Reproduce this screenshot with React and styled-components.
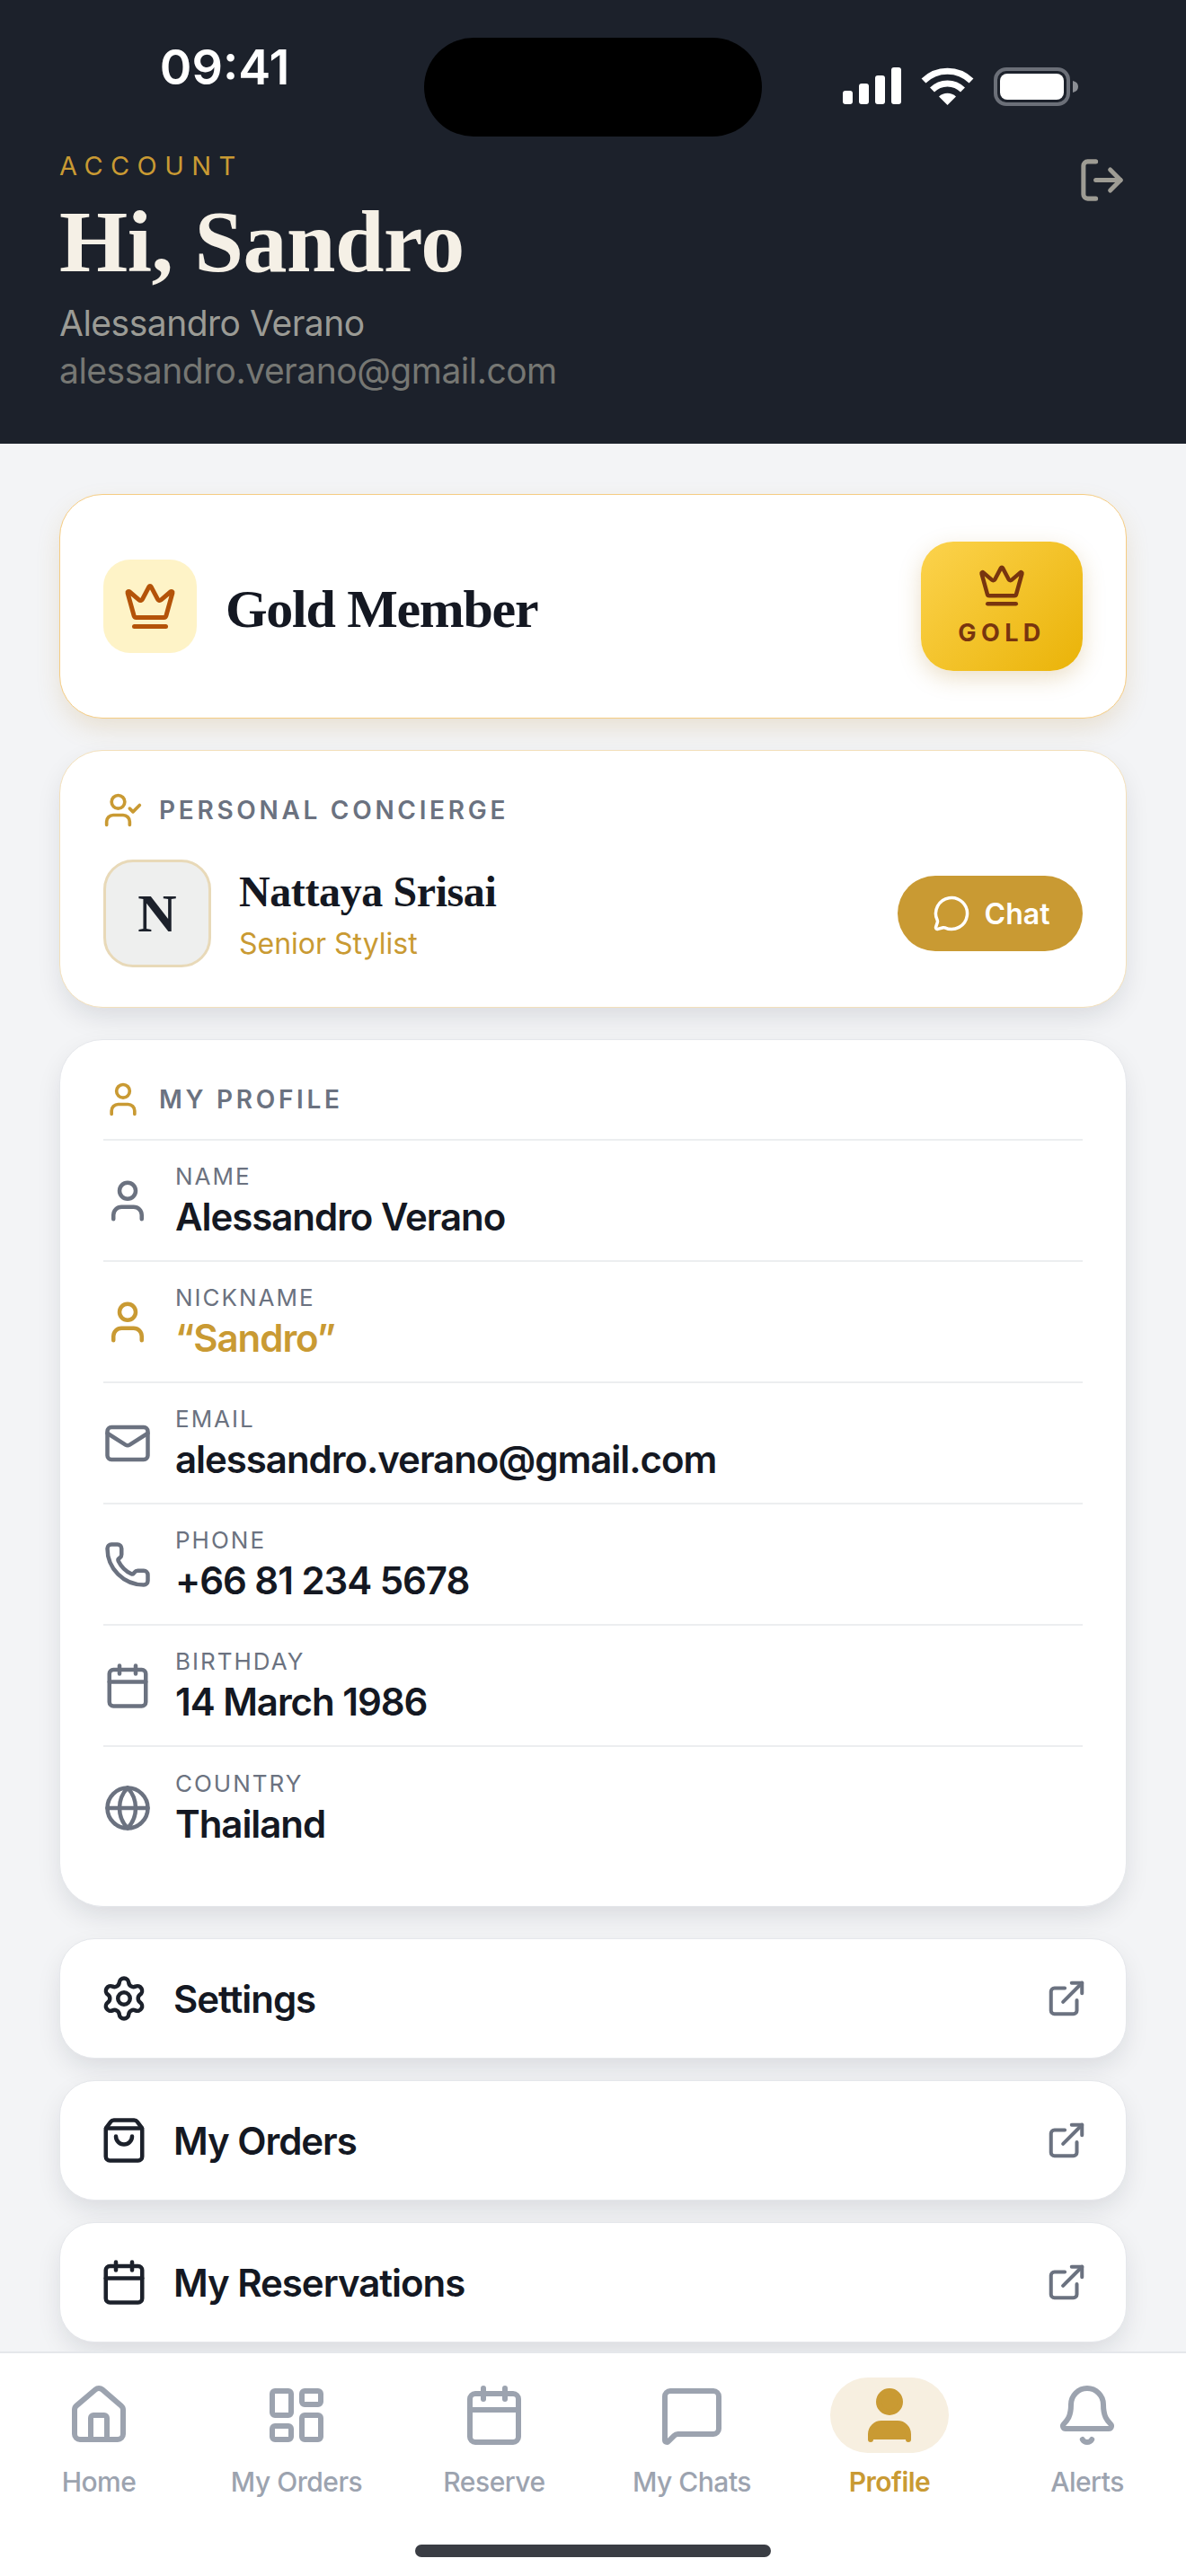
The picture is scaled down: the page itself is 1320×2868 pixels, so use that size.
import React from 'react'
import styled, { createGlobalStyle } from 'styled-components'
import {
  Bell,
  Calendar,
  Crown,
  ExternalLink,
  Globe,
  House,
  LayoutDashboard,
  LogOut,
  Mail,
  MessageCircle,
  MessageSquare,
  Phone,
  Settings,
  ShoppingBag,
  User,
  UserCheck,
} from 'lucide-react'

const GOLD = '#c99a33'
const INK = '#141822'
const SLATE = '#6b7280'
const SERIF = '"Liberation Serif", "Times New Roman", serif'

const profileRows = [
  { label: 'NAME', value: 'Alessandro Verano', Icon: User },
  { label: 'NICKNAME', value: '“Sandro”', Icon: User, accent: true },
  { label: 'EMAIL', value: 'alessandro.verano@gmail.com', Icon: Mail },
  { label: 'PHONE', value: '+66 81 234 5678', Icon: Phone },
  { label: 'BIRTHDAY', value: '14 March 1986', Icon: Calendar },
  { label: 'COUNTRY', value: 'Thailand', Icon: Globe },
]

const menuRows = [
  { label: 'Settings', Icon: Settings },
  { label: 'My Orders', Icon: ShoppingBag },
  { label: 'My Reservations', Icon: Calendar },
]

const navItems = [
  { label: 'Home', Icon: House },
  { label: 'My Orders', Icon: LayoutDashboard },
  { label: 'Reserve', Icon: Calendar },
  { label: 'My Chats', Icon: MessageSquare },
  { label: 'Profile', Icon: User, active: true },
  { label: 'Alerts', Icon: Bell },
]

const SignalIcon = () => (
  <svg width="65" height="41" viewBox="0 0 65 41" fill="#fff">
    <rect x="0" y="26" width="11" height="15" rx="3" />
    <rect x="18" y="18" width="11" height="23" rx="3" />
    <rect x="36" y="9" width="11" height="32" rx="3" />
    <rect x="54" y="0" width="11" height="41" rx="3" />
  </svg>
)

const WifiIcon = () => (
  <svg width="59" height="42" viewBox="0 0 59 42">
    <path d="M3 15 A 38 38 0 0 1 56 15" fill="none" stroke="#fff" strokeWidth="7" />
    <path d="M12.5 25 A 24 24 0 0 1 46.5 25" fill="none" stroke="#fff" strokeWidth="7" />
    <path d="M20 32.5 A 14 14 0 0 1 39 32.5 L29.5 42 Z" fill="#fff" />
  </svg>
)

const BatteryIcon = () => (
  <svg width="94" height="43" viewBox="0 0 94 43">
    <rect x="2" y="2" width="81" height="39" rx="12" fill="none" stroke="#6b6f78" strokeWidth="4" />
    <rect x="7" y="7" width="71" height="29" rx="8" fill="#fff" />
    <path d="M88 15 c4 1 6 3 6 6.500 s-2 5.500 -6 6.500 z" fill="#8b8e94" />
  </svg>
)

const App = () => {
  return (
    <Phone_>
      <GlobalStyle />
      <Header>
        <StatusBar>
          <TimeSlot>
            <Time>09:41</Time>
          </TimeSlot>
          <Island />
          <StatusIcons>
            <SignalIcon />
            <WifiIcon />
            <BatteryIcon />
          </StatusIcons>
        </StatusBar>
        <HeaderBody>
          <div>
            <Eyebrow>ACCOUNT</Eyebrow>
            <Greeting>Hi, Sandro</Greeting>
            <FullName>Alessandro Verano</FullName>
            <HeaderEmail>alessandro.verano@gmail.com</HeaderEmail>
          </div>
          <LogoutButton>
            <LogOut size={55} strokeWidth={2.2} />
          </LogoutButton>
        </HeaderBody>
      </Header>

      <Content>
        <MemberCard>
          <MemberLeft>
            <CrownTile>
              <Crown size={60} strokeWidth={2} />
            </CrownTile>
            <MemberTitle>Gold Member</MemberTitle>
          </MemberLeft>
          <GoldBadge>
            <Crown size={54} strokeWidth={2} />
            <GoldText>GOLD</GoldText>
          </GoldBadge>
        </MemberCard>

        <ConciergeCard>
          <SectionHead>
            <SectionIcon>
              <UserCheck size={44} strokeWidth={2} />
            </SectionIcon>
            <SectionTitle>PERSONAL CONCIERGE</SectionTitle>
          </SectionHead>
          <ConciergeRow>
            <Avatar>N</Avatar>
            <ConciergeInfo>
              <ConciergeName>Nattaya Srisai</ConciergeName>
              <ConciergeRole>Senior Stylist</ConciergeRole>
            </ConciergeInfo>
            <ChatButton>
              <MessageCircle size={42} strokeWidth={2} />
              Chat
            </ChatButton>
          </ConciergeRow>
        </ConciergeCard>

        <ProfileCard>
          <ProfileHead>
            <SectionIcon>
              <User size={44} strokeWidth={2} />
            </SectionIcon>
            <SectionTitle>MY PROFILE</SectionTitle>
          </ProfileHead>
          {profileRows.map(({ label, value, Icon, accent }) => (
            <ProfileRow key={label}>
              <RowIcon $accent={accent}>
                <Icon size={54} strokeWidth={2} />
              </RowIcon>
              <div>
                <RowLabel>{label}</RowLabel>
                <RowValue $accent={accent}>{value}</RowValue>
              </div>
            </ProfileRow>
          ))}
        </ProfileCard>

        <MenuList>
          {menuRows.map(({ label, Icon }) => (
            <MenuRow key={label}>
              <Icon size={54} strokeWidth={2} color="#1c212b" />
              <MenuLabel>{label}</MenuLabel>
              <ExternalLink size={46} strokeWidth={2.1} color={SLATE} />
            </MenuRow>
          ))}
        </MenuList>
      </Content>

      <BottomNav>
        <NavItems>
          {navItems.map(({ label, Icon, active }) => (
            <NavItem key={label} $active={active}>
              <NavIcon $active={active}>
                <Icon size={72} strokeWidth={2} fill={active ? 'currentColor' : 'none'} />
              </NavIcon>
              <NavLabel $active={active}>{label}</NavLabel>
            </NavItem>
          ))}
        </NavItems>
        <HomeIndicator />
      </BottomNav>
    </Phone_>
  )
}

export default App

const GlobalStyle = createGlobalStyle`
  html, body {
    margin: 0;
    padding: 0;
    background: #f3f4f6;
    font-family: Inter, "Liberation Sans", sans-serif;
  }
  * {
    box-sizing: border-box;
  }
`

const Phone_ = styled.div`
  width: 1320px;
  height: 2868px;
  display: flex;
  flex-direction: column;
  overflow: hidden;
  background: #f3f4f6;
`

const Header = styled.header`
  height: 494px;
  flex-shrink: 0;
  background: #1c212b;
  padding-top: 42px;
`

const StatusBar = styled.div`
  display: flex;
  height: 110px;
`

const TimeSlot = styled.div`
  width: 472px;
  padding-top: 10px;
  text-align: center;
  padding-left: 28px;
`

const Time = styled.span`
  font-size: 54px;
  line-height: 46px;
  font-weight: 600;
  color: #fff;
`

const Island = styled.div`
  width: 376px;
  height: 110px;
  border-radius: 55px;
  background: #000;
`

const StatusIcons = styled.div`
  display: flex;
  align-items: flex-start;
  gap: 22px;
  padding: 33px 0 0 90px;
`

const HeaderBody = styled.div`
  display: flex;
  justify-content: space-between;
  padding: 18px 66px 0 66px;
`

const Eyebrow = styled.div`
  font-size: 29px;
  line-height: 30px;
  font-weight: 400;
  letter-spacing: 8.400px;
  color: ${GOLD};
`

const Greeting = styled.h1`
  margin: 14px 0 0;
  font-family: ${SERIF};
  font-size: 98px;
  line-height: 110px;
  font-weight: 700;
  letter-spacing: -0.500px;
  color: #f5f0e6;
`

const FullName = styled.div`
  margin-top: 11px;
  font-size: 39px;
  line-height: 50px;
  letter-spacing: -0.500px;
  color: #9b9b95;
`

const HeaderEmail = styled.div`
  margin-top: 3px;
  font-size: 39px;
  line-height: 50px;
  letter-spacing: -0.500px;
  color: #767773;
`

const LogoutButton = styled.div`
  display: flex;
  margin-top: 3px;
  color: #9e9c94;
`

const Content = styled.main`
  flex: 1;
  min-height: 0;
  overflow: hidden;
  display: flex;
  flex-direction: column;
  gap: 35px;
  padding: 56px 66px 0;
`

const Card = styled.section`
  flex-shrink: 0;
  background: #fff;
  border-radius: 48px;
  border: 1.500px solid #e5e7eb;
  box-shadow: 0 12px 30px -4px rgba(17, 24, 39, 0.12);
`

const MemberCard = styled(Card)`
  height: 250px;
  display: flex;
  align-items: center;
  justify-content: space-between;
  padding: 0 48px;
  border-color: #f5cc82;
  box-shadow: 0 12px 30px -4px rgba(180, 130, 40, 0.2);
`

const MemberLeft = styled.div`
  display: flex;
  align-items: center;
  gap: 32px;
`

const CrownTile = styled.div`
  width: 104px;
  height: 104px;
  border-radius: 30px;
  background: #fef3c7;
  color: #b45309;
  display: flex;
  align-items: center;
  justify-content: center;
`

const MemberTitle = styled.h2`
  margin: 0;
  padding-top: 6px;
  font-family: ${SERIF};
  font-size: 60px;
  font-weight: 700;
  letter-spacing: -1.300px;
  color: ${INK};
`

const GoldBadge = styled.div`
  width: 180px;
  height: 144px;
  border-radius: 36px;
  padding-bottom: 5px;
  background: linear-gradient(135deg, #fcd34d, #eab308);
  box-shadow: 0 8px 24px rgba(180, 130, 40, 0.25);
  color: #78350f;
  display: flex;
  flex-direction: column;
  align-items: center;
  justify-content: center;
`

const GoldText = styled.div`
  font-size: 27px;
  line-height: 30px;
  font-weight: 700;
  letter-spacing: 5.400px;
  margin-top: 11px;
`

const ConciergeCard = styled(Card)`
  padding: 44px 48px 0;
  height: 287px;
  border-color: #f3e0bb;
`

const SectionHead = styled.div`
  display: flex;
  align-items: center;
  gap: 18px;
`

const ProfileHead = styled(SectionHead)`
  height: 112px;
  padding-top: 22px;
  border-bottom: 2px solid #eceef0;
`

const SectionIcon = styled.div`
  display: flex;
  color: ${GOLD};
`

const SectionTitle = styled.div`
  font-size: 28px;
  font-weight: 600;
  letter-spacing: 3.700px;
  color: ${SLATE};
`

const ConciergeRow = styled.div`
  display: flex;
  align-items: center;
  margin-top: 33px;
`

const Avatar = styled.div`
  width: 120px;
  height: 120px;
  border-radius: 33px;
  border: 3px solid #e8d9b8;
  background: #eeefee;
  display: flex;
  align-items: center;
  justify-content: center;
  font-family: ${SERIF};
  font-size: 60px;
  font-weight: 700;
  color: #1c212b;
`

const ConciergeInfo = styled.div`
  flex: 1;
  margin-left: 31px;
`

const ConciergeName = styled.div`
  font-family: ${SERIF};
  font-size: 48px;
  line-height: 60px;
  font-weight: 700;
  letter-spacing: -0.400px;
  color: ${INK};
`

const ConciergeRole = styled.div`
  margin-top: 8px;
  font-size: 32px;
  line-height: 40px;
  color: ${GOLD};
`

const ChatButton = styled.div`
  width: 206px;
  height: 84px;
  border-radius: 42px;
  padding-left: 2px;
  background: ${GOLD};
  color: #fff;
  font-size: 32px;
  font-weight: 600;
  display: flex;
  align-items: center;
  justify-content: center;
  gap: 16px;
`

const ProfileCard = styled(Card)`
  height: 966px;
  padding: 0 48px;
`

const ProfileRow = styled.div`
  height: 135px;
  display: flex;
  align-items: center;
  gap: 26px;
  border-bottom: 2px solid #eceef0;

  &:last-child {
    border-bottom: none;
  }
`

const RowIcon = styled.div`
  display: flex;
  color: ${p => (p.$accent ? GOLD : SLATE)};
`

const RowLabel = styled.div`
  font-size: 26px;
  line-height: 32px;
  letter-spacing: 2px;
  color: ${SLATE};
`

const RowValue = styled.div`
  margin-top: 4px;
  font-size: 42px;
  line-height: 50px;
  font-weight: 600;
  letter-spacing: -1.050px;
  color: ${p => (p.$accent ? GOLD : INK)};
`

const MenuList = styled.div`
  display: flex;
  flex-direction: column;
  gap: 24px;
`

const MenuRow = styled(Card)`
  height: 134px;
  border-radius: 39px;
  display: flex;
  align-items: center;
  gap: 28px;
  padding: 0 43px 0 44px;
`

const MenuLabel = styled.div`
  flex: 1;
  font-size: 42px;
  font-weight: 600;
  letter-spacing: -1.050px;
  color: ${INK};
`

const BottomNav = styled.nav`
  height: 250px;
  flex-shrink: 0;
  background: #fff;
  border-top: 2px solid #e5e7eb;
  position: relative;
  z-index: 1;
  padding-top: 27px;
`

const NavItems = styled.div`
  display: grid;
  grid-template-columns: repeat(6, 1fr);
`

const NavItem = styled.div`
  display: flex;
  flex-direction: column;
  align-items: center;
  color: ${p => (p.$active ? GOLD : '#9ca3af')};
`

const NavIcon = styled.div`
  width: 132px;
  height: 84px;
  border-radius: 42px;
  background: ${p => (p.$active ? '#f7efe0' : 'transparent')};
  display: flex;
  align-items: center;
  justify-content: center;
`

const NavLabel = styled.div`
  margin-top: 14px;
  font-size: 30px;
  line-height: 36px;
  font-weight: ${p => (p.$active ? 600 : 500)};
  letter-spacing: -0.500px;
`

const HomeIndicator = styled.div`
  width: 396px;
  height: 14px;
  border-radius: 7px;
  background: #3a3d44;
  margin: 52px auto 0;
`
